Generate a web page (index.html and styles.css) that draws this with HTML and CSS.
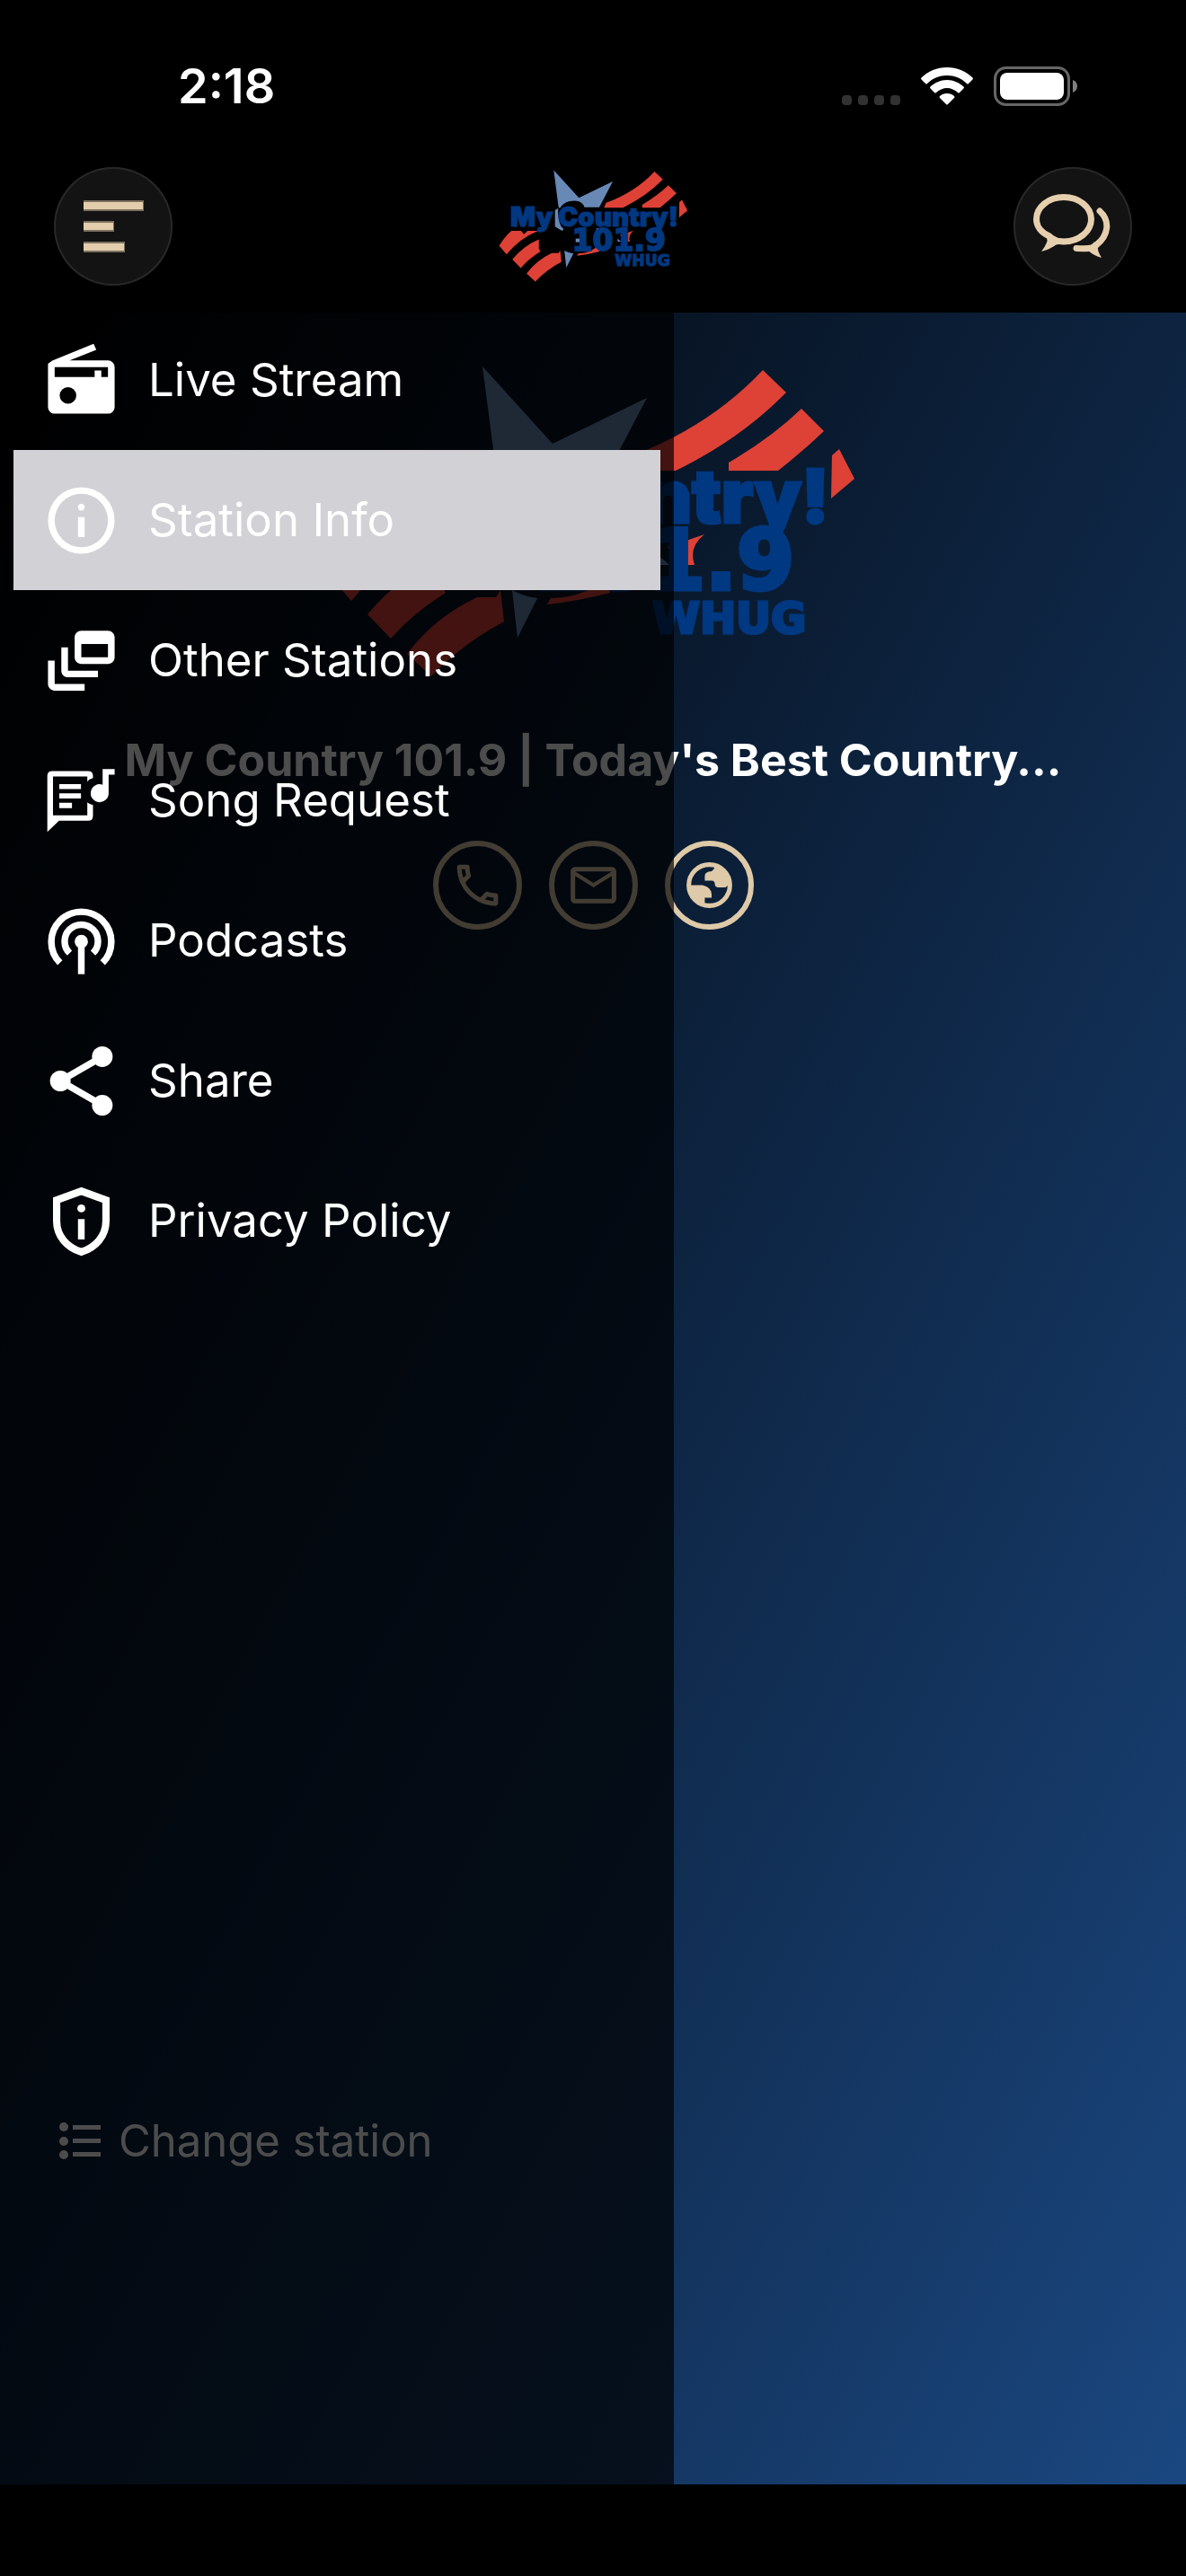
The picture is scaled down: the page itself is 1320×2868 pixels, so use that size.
FILE: index.html
```html
<!DOCTYPE html>
<html lang="en">
<head>
    <meta charset="UTF-8">
    <meta name="viewport" content="width=device-width, initial-scale=1.0">
    <title>My Country 101.9</title>
    <link rel="stylesheet" href="styles.css">
</head>
<body>

<header class="header">
    <div class="status">
        <span class="time">2:18</span>
        <div class="status-icons">
            <svg width="65" height="42" viewBox="0 0 65 42" fill="#323232">
                <rect x="0" y="31" width="11" height="11" rx="4"/>
                <rect x="18" y="31" width="11" height="11" rx="4"/>
                <rect x="36" y="31" width="11" height="11" rx="4"/>
                <rect x="54" y="31" width="11" height="11" rx="4"/>
            </svg>
            <svg width="58" height="42" viewBox="0 0 58 42" fill="#fff">
                <path d="M29 0C40 0 50 4 58 12Q58 13 57 14L53 18Q52 19 51 18C45 12 37 9 29 9S13 12 7 18Q6 19 5 18L1 14Q0 13 0 12C8 4 18 0 29 0Z"/>
                <path d="M29 14C36 14 43 17 48 22Q48 23 47 24L43 28Q42 29 41 28C38 25 33 23 29 23S20 25 17 28Q16 29 15 28L11 24Q10 23 10 22C15 17 22 14 29 14Z"/>
                <path d="M29 29C32 29 35 30 37 32Q38 33 37 34L30 41Q29 42 28 41L21 34Q20 33 21 32C23 30 26 29 29 29Z"/>
            </svg>
            <svg width="94" height="44" viewBox="0 0 94 44">
                <rect x="1.5" y="1.5" width="82" height="41" rx="12" fill="none" stroke="#666" stroke-width="3"/>
                <rect x="7" y="7" width="71" height="30" rx="8" fill="#fff"/>
                <path d="M88 15Q93 17 93 22T88 29Z" fill="#808080"/>
            </svg>
        </div>
    </div>
    <div class="topbar">
        <button class="round-btn" type="button" aria-label="Menu">
            <svg viewBox="0 0 132 132" fill="#e3cdac">
                <path opacity=".5" d="M33 37H100V49H33ZM33 60H67V72H33ZM33 83H79V95H33Z"/>
                <path d="M33 39H99V47H33ZM33 62H66V70H33ZM33 85H78V93H33Z"/>
            </svg>
        </button>
        <svg class="logo-small" viewBox="0 0 592 356" role="img" aria-label="My Country 101.9 WHUG">
            <g id="logo">
                <g fill="#6889b5">
                    <path d="M173 4L251 90L356 39L314 119H268Q262 100 238 99Q205 99 192 122L188 119Z"/>
                    <path d="M177 128L187 122Q184 155 196 178L204 187L199 192L177 179Z"/>
                    <path d="M241 216H255V227H241Z"/>
                    <path d="M305 184H315V202L305 192Z"/>
                    <path d="M206 253Q218 260 234 262L212 306Z"/>
                    <path d="M371 216L381 225H371Z"/>
                </g>
                <g fill="#de4136">
                    <path d="M335 105Q425 72 485 8L511 33Q460 85 388 120H329Z"/>
                    <path d="M447 111Q495 83 528 51L553 76Q530 98 502 120H447Z"/>
                    <path d="M562 103L570 96L587 129L561 151Z"/>
                    <path d="M420 191L379 205L391 218L388 225H409Q402 205 420 191Z"/>
                    <path d="M4 238Q23 208 42 192H72L81 202L92 192H125Q68 215 27 265Z"/>
                    <path d="M45 280Q80 238 127 218V247L132 256Q95 279 71 307Z"/>
                    <path d="M89 324Q120 283 167 261H188L193 253L197 288Q150 313 116 349Z"/>
                    <path d="M249 262Q290 262 315 233V256Q280 265 245 269Z"/>
                </g>
                <g fill="#003881" stroke="#003881">
                    <text class="logo-name" x="299" y="178">My Country!</text>
                    <text class="logo-freq" x="520" y="252">101.9</text>
                    <text class="logo-call" x="448" y="301">WHUG</text>
                </g>
            </g>
        </svg>
        <button class="round-btn" type="button" aria-label="Chat">
            <svg viewBox="0 0 132 132" fill="none" stroke="#e6cfae" stroke-width="7" stroke-linecap="round" stroke-linejoin="round">
                <path d="M56 33.500C73 33.500 86.500 44.500 86.500 58S73 83 56 83Q51 82 46 83L40 77C31 73 25.500 66 25.500 58C25.500 44.500 39 33.500 56 33.500Z"/>
                <path stroke="none" fill="#e6cfae" d="M33 74Q39 79 37 84Q35 89 31 94Q42 91 48 86L52 80L40 74Z"/>
                <path d="M96 49C107 59 107 75 92 87L87 90Q83 91 70 90.500"/>
                <path stroke="none" fill="#e6cfae" d="M83 93Q90 99 98 101Q93 93 94 88L90 83Z"/>
            </svg>
        </button>
    </div>
</header>

<main class="page">
    <svg class="logo-big" viewBox="0 0 592 356" role="img" aria-label="My Country 101.9 WHUG"><use href="#logo"/></svg>
    <h1 class="title">My Country 101.9 | Today's Best Country...</h1>
    <div class="contacts">
        <a class="contact" href="#" aria-label="Call">
            <svg viewBox="0 0 24 24"><path d="M6.540 5c.06.89.21 1.760.45 2.590l-1.200 1.200c-.41-1.200-.67-2.470-.76-3.790h1.510m9.860 12.020c.85.24 1.720.39 2.600.45v1.490c-1.320-.09-2.590-.35-3.800-.75l1.200-1.190M7.500 3H4c-.55 0-1 .45-1 1 0 9.390 7.610 17 17 17 .55 0 1-.45 1-1v-3.490c0-.55-.45-1-1-1-1.240 0-2.450-.2-3.570-.57-.1-.04-.21-.05-.31-.05-.26 0-.51.1-.71.29l-2.200 2.200c-2.830-1.450-5.150-3.760-6.590-6.590l2.200-2.200c.28-.28.36-.67.25-1.020C8.700 6.450 8.500 5.250 8.500 4c0-.55-.45-1-1-1z"/></svg>
        </a>
        <a class="contact" href="#" aria-label="Email">
            <svg viewBox="0 0 24 24"><path d="M22 6c0-1.100-.9-2-2-2H4c-1.100 0-2 .9-2 2v12c0 1.100.9 2 2 2h16c1.100 0 2-.9 2-2V6zm-2 0l-8 5-8-5h16zm0 12H4V8l8 5 8-5v10z"/></svg>
        </a>
        <a class="contact" href="#" aria-label="Website">
            <svg viewBox="0 0 24 24">
                <circle cx="12" cy="12" r="9" fill="none" stroke="#dec9a8" stroke-width="2"/>
                <path d="M14.500 3.500C14 5 13.500 6 12 6Q10 6.500 10 8V10H13Q14.400 10 14.400 11.500Q14.400 13 16 13H18.500Q20 13 20.500 11C20.500 7 18 4.500 14.500 3.500Z"/>
                <path d="M3 12H9Q13 13 13 16V17.500H10V20.500C6 20 3 16.500 3 12Z"/>
            </svg>
        </a>
    </div>
    <button class="change-btn" type="button">
        <svg viewBox="0 0 54 48" fill="#fff">
            <circle cx="11" cy="8" r="5"/><circle cx="11" cy="24" r="5"/><circle cx="11" cy="39" r="5"/>
            <path d="M21 6H52V11H21ZM21 21H52V26H21ZM21 36H52V41H21Z"/>
        </svg>
        Change station
    </button>

    <!-- side menu -->
    <nav class="drawer">
        <a class="menu-item" href="#">
            <svg viewBox="0 0 24 24"><path fill-rule="evenodd" d="M20 6A2 2 0 0 1 22 8V20A2 2 0 0 1 20 22H4A2 2 0 0 1 2 20V7L3.300 6.100L15.700 1L16.500 2.800L8.500 6ZM20 8H4V11H16V9H18V11H20ZM8 14A2.500 2.500 0 1 0 8 19A2.500 2.500 0 1 0 8 14Z"/></svg>
            Live Stream
        </a>
        <a class="menu-item active" href="#" aria-current="page">
            <svg viewBox="0 0 24 24"><path fill-rule="evenodd" d="M12 2a10 10 0 1 0 0 20a10 10 0 1 0 0-20ZM12 4a8 8 0 1 1 0 16a8 8 0 1 1 0-16ZM11 11H13V17H11Z"/><circle cx="12" cy="8" r="1"/></svg>
            Station Info
        </a>
        <a class="menu-item" href="#">
            <svg viewBox="0 0 24 24"><path d="M8 8H6v7c0 1.100.9 2 2 2h9v-2H8V8zM20 3h-8c-1.100 0-2 .9-2 2v6c0 1.100.9 2 2 2h8c1.100 0 2-.9 2-2V5c0-1.100-.9-2-2-2zm0 8h-8V7h8v4zM4 12H2v7c0 1.100.9 2 2 2h9v-2H4v-7z"/></svg>
            Other Stations
        </a>
        <a class="menu-item" href="#">
            <svg viewBox="0 0 24 24">
                <path d="M1.800 21.400V4.500Q1.800 3.100 3.300 3.100H14Q15.500 3.100 15.500 4.500V5.200Q14.300 5.500 13.800 6.300V4.700H3.500V16.400H13.800V12.500Q14.500 13.200 15.500 13.300V16.500Q15.500 18 14 18H5.300Z"/>
                <path d="M5.400 7H11.900V8.500H5.400ZM5.400 9.800H11.900V11.300H5.400ZM5.400 12.600H9.200V14.200H5.400Z"/>
                <path d="M18.400 2.500H22V4.200H20.200V9.500A2.700 2.700 0 1 1 18.400 7.200Z"/>
            </svg>
            Song Request
        </a>
        <a class="menu-item" href="#">
            <svg viewBox="0 0 24 24">
                <path fill="none" stroke="#fff" stroke-width="2" d="M5.600 18.600A9 9 0 1 1 18.400 18.600M8.500 15.700A5 5 0 1 1 15.500 15.700"/>
                <circle cx="12" cy="12.200" r="2"/>
                <path d="M11 12H13V22H11Z"/>
            </svg>
            Podcasts
        </a>
        <a class="menu-item" href="#">
            <svg viewBox="0 0 24 24">
                <path fill="none" stroke="#fff" stroke-width="2" d="M18.300 4.700L5.700 12L18.300 19.300"/>
                <circle cx="5.700" cy="12" r="3.100"/><circle cx="18.300" cy="4.700" r="3.100"/><circle cx="18.300" cy="19.300" r="3.100"/>
            </svg>
            Share
        </a>
        <a class="menu-item" href="#">
            <svg viewBox="0 0 24 24">
                <path fill="none" stroke="#fff" stroke-width="2.200" d="M12 3L19.400 5.700V12C19.400 16.500 16.300 19.900 12 21.300C7.700 19.900 4.600 16.500 4.600 12V5.700Z"/>
                <circle cx="12" cy="8.200" r="1.200"/>
                <path d="M11 11.400H13V17.500H11Z"/>
            </svg>
            Privacy Policy
        </a>
    </nav>
</main>

<footer class="home-area"></footer>

</body>
</html>
```
FILE: styles.css
```css
* {
    box-sizing: border-box;
}
body {
    margin: 0;
    min-height: 100vh;
    display: flex;
    flex-direction: column;
    background-color: #000;
    color: #fff;
    font-family: Inter, "Liberation Sans", sans-serif;
    font-size: 51px;
    line-height: 60px;
}

/* status bar */
.status {
    display: flex;
    justify-content: space-between;
    align-items: center;
    padding: 66px 120px 0 198px;
}
.time {
    font-size: 54px;
    font-weight: 600;
}
.status-icons {
    display: flex;
    align-items: center;
    gap: 23px;
}

/* top bar */
.topbar {
    display: flex;
    justify-content: space-between;
    align-items: center;
    padding: 60px 60px 30px;
}
.round-btn {
    width: 132px;
    height: 132px;
    padding: 0;
    border: none;
    border-radius: 50%;
    background-color: #131313;
    box-shadow: inset 0 0 0 2px #282828;
    cursor: pointer;
}
.round-btn svg {
    display: block;
    width: 132px;
    height: 132px;
}

/* logo */
.logo-small {
    width: 213px;
    height: 128px;
}
.logo-big {
    width: 592px;
    height: 356px;
}
.logo-name {
    font-family: Inter, sans-serif;
    font-size: 82px;
    font-weight: 900;
    text-anchor: middle;
    stroke-width: 3px;
}
.logo-freq {
    font-family: "DejaVu Sans", sans-serif;
    font-size: 92px;
    font-weight: bold;
    text-anchor: end;
    stroke-width: 5px;
}
.logo-call {
    font-family: "DejaVu Sans", sans-serif;
    font-size: 48px;
    font-weight: bold;
    text-anchor: middle;
    stroke-width: 3px;
}

/* station page */
.page {
    position: relative;
    flex: 1;
    display: flex;
    flex-direction: column;
    align-items: center;
    padding: 56px 60px 352px;
    background: linear-gradient(to bottom right, #000, #1a4780);
}
.title {
    margin: 56px 0 60px;
    font-size: 50px;
    font-weight: 700;
    line-height: 60px;
    white-space: nowrap;
}
.contacts {
    display: flex;
    gap: 30px;
}
.contact {
    display: flex;
    align-items: center;
    justify-content: center;
    width: 99px;
    height: 99px;
    border: 6px solid #dec9a8;
    border-radius: 50%;
}
.contact svg {
    width: 61px;
    height: 61px;
    fill: #dec9a8;
}
.change-btn {
    display: flex;
    align-items: center;
    align-self: flex-start;
    gap: 18px;
    margin-top: auto;
    padding: 0;
    border: none;
    background: none;
    color: #fff;
    font: inherit;
    font-size: 49px;
    cursor: pointer;
}
.change-btn svg {
    width: 54px;
    height: 48px;
}

/* side menu */
.drawer {
    position: absolute;
    top: 0;
    bottom: 0;
    left: 0;
    width: 750px;
    max-width: 100%;
    padding: 0 15px;
    background-color: rgba(0, 0, 0, 0.7);
}
.menu-item {
    display: flex;
    align-items: center;
    gap: 30px;
    height: 156px;
    padding: 0 31px;
    color: #fff;
    text-decoration: none;
}
.menu-item:first-child {
    margin-top: -3px;
}
.menu-item svg {
    width: 89px;
    height: 89px;
    fill: #fff;
}
.menu-item.active {
    background-color: #d1d1d6;
}

.home-area {
    height: 102px;
}
```
